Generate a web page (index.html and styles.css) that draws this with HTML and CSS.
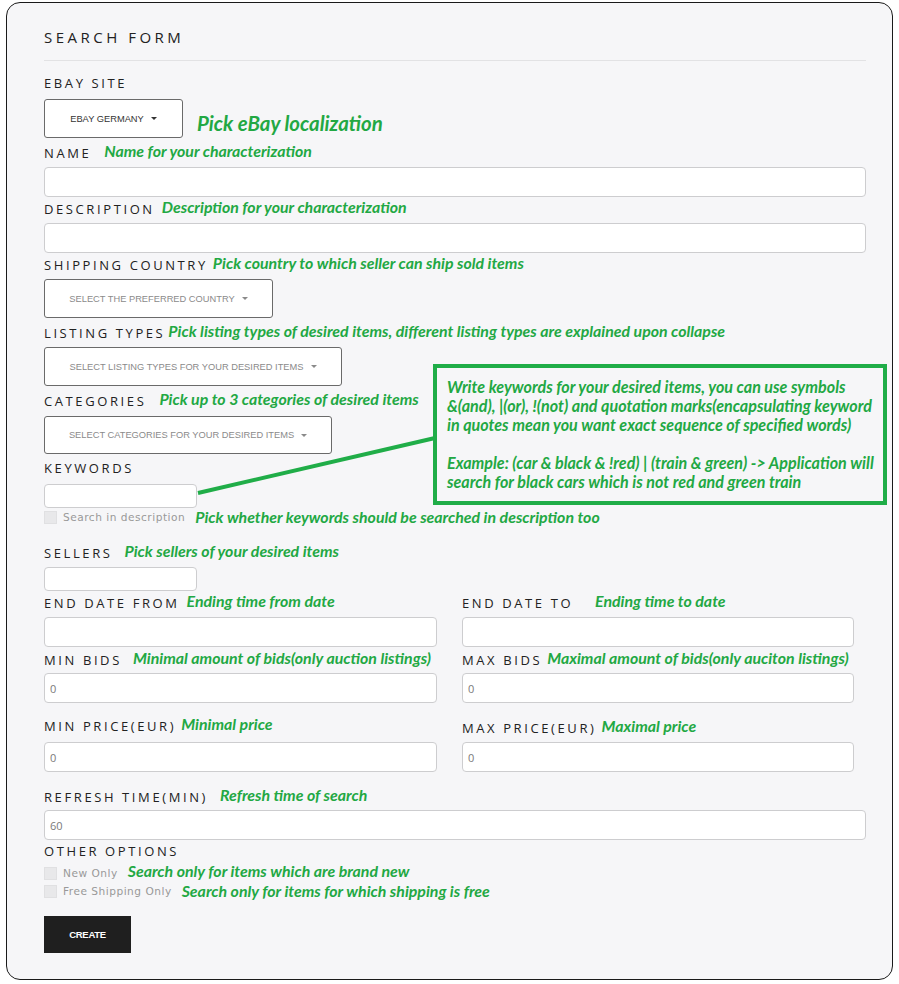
FILE: index.html
```html
<!DOCTYPE html>
<html>
<head>
<meta charset="utf-8">
<link rel="stylesheet" href="styles.css">
</head>
<body>
<div class="card">
  <div class="title">SEARCH FORM</div>
  <div class="rule"></div>

  <div class="label-row mt12"><span class="label">EBAY SITE</span></div>
  <div class="row mt6">
    <button class="dd dd-dark">EBAY GERMANY <span class="caret"></span></button>
    <span class="note note-lg">Pick eBay localization</span>
  </div>

  <div class="label-row mt4"><span class="label">NAME</span><span class="note g15">Name for your characterization</span></div>
  <div class="input mt5"></div>

  <div class="label-row mt1"><span class="label">DESCRIPTION</span><span class="note g8">Description for your characterization</span></div>
  <div class="input mt5"></div>

  <div class="label-row mt1"><span class="label">SHIPPING COUNTRY</span><span class="note g6">Pick country to which seller can ship sold items</span></div>
  <div class="row mt5">
    <button class="dd dd-country">SELECT THE PREFERRED COUNTRY <span class="caret"></span></button>
  </div>

  <div class="label-row mt4"><span class="label">LISTING TYPES</span><span class="note g4">Pick listing types of desired items, different listing types are explained upon collapse</span></div>
  <div class="row mt5">
    <button class="dd dd-listing">SELECT LISTING TYPES FOR YOUR DESIRED ITEMS <span class="caret"></span></button>
  </div>

  <div class="label-row mt4"><span class="label">CATEGORIES</span><span class="note g15">Pick up to 3 categories of desired items</span></div>
  <div class="row mt6">
    <button class="dd dd-cat">SELECT CATEGORIES FOR YOUR DESIRED ITEMS <span class="caret"></span></button>
  </div>

  <div class="label-row mt4"><span class="label">KEYWORDS</span></div>
  <div class="input input-sm mt6"></div>
  <div class="check-row mt1">
    <span class="box"></span><span class="check-text">Search in description</span>
    <span class="note g10">Pick whether keywords should be searched in description too</span>
  </div>

  <div class="label-row mt17"><span class="label">SELLERS</span><span class="note g14">Pick sellers of your desired items</span></div>
  <div class="input input-sm mt5"></div>

  <div class="cols mt1">
    <div class="col">
      <div class="label-row"><span class="label">END DATE FROM</span><span class="note g8">Ending time from date</span></div>
      <div class="input mt5"></div>
    </div>
    <div class="col">
      <div class="label-row"><span class="label">END DATE TO</span><span class="note g22">Ending time to date</span></div>
      <div class="input mt5"></div>
    </div>
  </div>

  <div class="cols mt2">
    <div class="col">
      <div class="label-row"><span class="label">MIN BIDS</span><span class="note g13">Minimal amount of bids(only auction listings)</span></div>
      <div class="input mt4"><span class="val">0</span></div>
    </div>
    <div class="col">
      <div class="label-row"><span class="label">MAX BIDS</span><span class="note g6">Maximal amount of bids(only auciton listings)</span></div>
      <div class="input mt4"><span class="val">0</span></div>
    </div>
  </div>

  <div class="cols mt12">
    <div class="col">
      <div class="label-row"><span class="label">MIN PRICE(EUR)</span><span class="note g6">Minimal price</span></div>
      <div class="input mt7"><span class="val">0</span></div>
    </div>
    <div class="col">
      <div class="label-row lower"><span class="label">MAX PRICE(EUR)</span><span class="note g6">Maximal price</span></div>
      <div class="input mt5"><span class="val">0</span></div>
    </div>
  </div>

  <div class="label-row mt14"><span class="label">REFRESH TIME(MIN)</span><span class="note g14">Refresh time of search</span></div>
  <div class="input mt4"><span class="val">60</span></div>

  <div class="label-row mt1"><span class="label">OTHER OPTIONS</span></div>
  <div class="check-row mt4">
    <span class="box"></span><span class="check-text">New Only</span>
    <span class="note g10 up">Search only for items which are brand new</span>
  </div>
  <div class="check-row mt2">
    <span class="box"></span><span class="check-text">Free Shipping Only</span>
    <span class="note g10">Search only for items for which shipping is free</span>
  </div>

  <button class="create mt17">CREATE</button>

  <svg class="pointer" width="250" height="70" viewBox="0 0 250 70">
    <line x1="8" y1="63" x2="245" y2="8" stroke="#20ad48" stroke-width="4"/>
  </svg>
  <div class="callout">
    <p>Write keywords for your desired items, you can use symbols<br>&amp;(and), |(or), !(not) and quotation marks(encapsulating keyword<br>in quotes mean you want exact sequence of specified words)</p>
    <p class="gap">Example: (car &amp; black &amp; !red) | (train &amp; green) -&gt; Application will<br>search for black cars which is not red and green train</p>
  </div>
</div>
</body>
</html>
```

FILE: styles.css
```css
* { box-sizing: border-box; }
html, body { margin: 0; padding: 0; background: #ffffff; }
body { width: 899px; height: 984px; overflow: hidden; }

.card {
  position: relative;
  margin: 2px 0 0 6px;
  width: 887px;
  height: 978px;
  border: 1px solid #1a1a1a;
  border-radius: 14px;
  background: #f6f6f8;
  padding: 24px 26px 0 37px;
  font-family: "Open Sans", "Liberation Sans", sans-serif;
  color: #222;
}

.title {
  height: 20px;
  line-height: 20px;
  font-size: 15px;
  letter-spacing: 3.5px;
  color: #222;
}
.rule { margin-top: 13px; height: 1px; background: #e2e2e4; }

.label-row {
  display: flex;
  align-items: baseline;
  height: 20px;
  line-height: 20px;
  white-space: nowrap;
}
.label-row.lower { margin-top: 2px; }
.label {
  font-size: 13px;
  letter-spacing: 2.6px;
  color: #222;
}

.note {
  font-family: Lato, "Liberation Sans", sans-serif;
  font-weight: 700;
  font-style: italic;
  font-size: 15.9px;
  color: #22a843;
  white-space: nowrap;
  position: relative;
  top: -1px;
}
.note-lg { font-size: 20.4px; margin-left: 14px; margin-top: 9px; top: 0; }
.g4 { margin-left: 3px; }
.g6 { margin-left: 5px; }
.g8 { margin-left: 7px; }
.g10 { margin-left: 10px; }
.g13 { margin-left: 11px; }
.g14 { margin-left: 12px; }
.g15 { margin-left: 13px; }
.g22 { margin-left: 22px; }
.note.up { top: -3px; }

.row { display: flex; align-items: center; }

.dd {
  height: 39px;
  display: inline-flex;
  align-items: center;
  justify-content: center;
  gap: 5px;
  background: #fff;
  border: 1px solid #6a6a6a;
  border-radius: 3px;
  padding: 0 24px;
  font-family: "Liberation Sans", Arial, sans-serif;
  font-size: 9.3px;
  color: #8a8a8a;
  white-space: nowrap;
}
.dd-dark { width: 139px; color: #333; }
.dd-country { width: 229px; }
.dd-listing { width: 298px; }
.dd-cat { width: 288px; height: 38px; }
.caret {
  display: inline-block;
  width: 0; height: 0;
  border-left: 3.5px solid transparent;
  border-right: 3.5px solid transparent;
  border-top: 3.5px solid currentColor;
  margin-left: 2px;
}

.input {
  height: 30px;
  background: #fff;
  border: 1px solid #cdcdcf;
  border-radius: 4px;
  display: flex;
  align-items: center;
  padding-left: 5px;
}
.input-sm { width: 153px; height: 24px; }
.val {
  font-family: "Open Sans", sans-serif;
  font-size: 11px;
  color: #7a7a7a;
}

.check-row {
  display: flex;
  align-items: center;
  height: 16px;
  white-space: nowrap;
}
.box {
  width: 13px; height: 13px;
  background: #e8e8ea;
  border: 1px solid #e0e0e2;
  margin-right: 6px;
  flex: none;
}
.check-text {
  font-family: "DejaVu Sans", Verdana, sans-serif;
  font-size: 10.6px;
  letter-spacing: 0.5px;
  color: #999;
}

.cols {
  display: grid;
  grid-template-columns: 393px 392px;
  column-gap: 25px;
}

.create {
  display: block;
  width: 87px;
  height: 37px;
  border: none;
  background: #1f1f1f;
  color: #fff;
  font-family: "Liberation Sans", Arial, sans-serif;
  font-weight: 700;
  font-size: 9.5px;
  letter-spacing: -0.3px;
  padding: 0;
}

.mt1 { margin-top: 1px; }
.mt2 { margin-top: 2px; }
.mt4 { margin-top: 4px; }
.mt5 { margin-top: 5px; }
.mt6 { margin-top: 6px; }
.mt7 { margin-top: 7px; }
.mt12 { margin-top: 12px; }
.mt14 { margin-top: 14px; }
.mt17 { margin-top: 17px; }

.pointer {
  position: absolute;
  left: 183px;
  top: 427px;
}
.callout {
  position: absolute;
  left: 426px;
  top: 361px;
  width: 454px;
  height: 141px;
  border: 4px solid #20ad48;
  background: #f6f6f8;
  padding: 9px 0 0 10px;
  font-family: Lato, "Liberation Sans", sans-serif;
  font-weight: 700;
  font-style: italic;
  font-size: 16.1px;
  line-height: 19px;
  color: #22a843;
  white-space: nowrap;
  overflow: hidden;
}
.callout p { margin: 0; }
.callout p.gap { margin-top: 19px; }
```
